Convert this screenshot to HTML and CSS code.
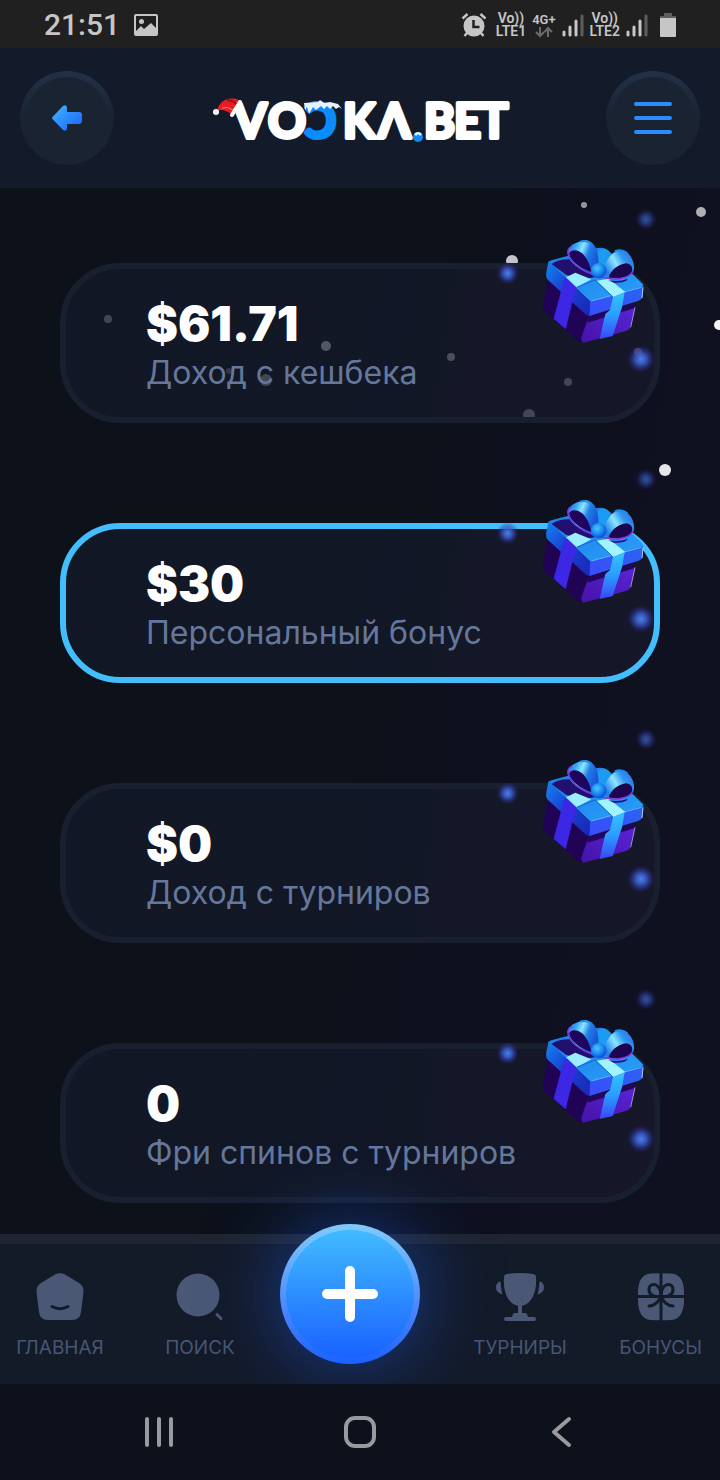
FILE: index.html
```html
<!DOCTYPE html>
<html lang="ru">
<head>
    <meta charset="UTF-8">
    <meta name="viewport" content="width=device-width, initial-scale=1.0">
    <title>VODKA.BET</title>
    <link rel="stylesheet" href="styles.css">
</head>
<body>
    <svg class="sprite" width="0" height="0" aria-hidden="true">
        <defs>
            <radialGradient id="spark">
                <stop offset="0" stop-color="#4b83ea"/>
                <stop offset="0.4" stop-color="#3a5cc8" stop-opacity="0.85"/>
                <stop offset="1" stop-color="#2a1d90" stop-opacity="0"/>
            </radialGradient>
            <linearGradient id="lidLeft" x1="0" y1="0" x2="1" y2="1">
                <stop offset="0" stop-color="#1685ee"/>
                <stop offset="0.4" stop-color="#1747d6"/>
                <stop offset="1" stop-color="#1a26b4"/>
            </linearGradient>
            <linearGradient id="lidTop" x1="0" y1="0" x2="1" y2="1">
                <stop offset="0" stop-color="#1b7ce8"/>
                <stop offset="1" stop-color="#2a9ff8"/>
            </linearGradient>
            <linearGradient id="lidRight" x1="0" y1="1" x2="1" y2="0">
                <stop offset="0" stop-color="#3a4cfb"/>
                <stop offset="1" stop-color="#2a64f0"/>
            </linearGradient>
            <linearGradient id="boxRight" x1="0" y1="1" x2="1" y2="0">
                <stop offset="0" stop-color="#4512a8"/>
                <stop offset="1" stop-color="#5a25d8"/>
            </linearGradient>
            <linearGradient id="tapeRight" x1="0" y1="0" x2="0" y2="1">
                <stop offset="0" stop-color="#35c3ff"/>
                <stop offset="0.5" stop-color="#2a9dff"/>
                <stop offset="1" stop-color="#3a45fa"/>
            </linearGradient>
            <linearGradient id="loopLeft" x1="0" y1="0" x2="1" y2="0.4">
                <stop offset="0" stop-color="#4a48d8"/>
                <stop offset="0.3" stop-color="#35a8f2"/>
                <stop offset="0.5" stop-color="#8fe6ff"/>
                <stop offset="0.7" stop-color="#1f7fe8"/>
                <stop offset="1" stop-color="#1a55d8"/>
            </linearGradient>
            <linearGradient id="loopRight" x1="0" y1="0.6" x2="1" y2="0">
                <stop offset="0" stop-color="#1f7fe8"/>
                <stop offset="0.35" stop-color="#8fe6ff"/>
                <stop offset="0.6" stop-color="#2f98f0"/>
                <stop offset="1" stop-color="#3a60e0"/>
            </linearGradient>
            <radialGradient id="knot" cx="0.4" cy="0.35" r="0.7">
                <stop offset="0" stop-color="#4cc6ff"/>
                <stop offset="0.6" stop-color="#1580ee"/>
                <stop offset="1" stop-color="#1b3cc8"/>
            </radialGradient>
            <linearGradient id="arrow" x1="0" y1="0" x2="1" y2="1">
                <stop offset="0" stop-color="#40b8ff"/>
                <stop offset="1" stop-color="#1a5fff"/>
            </linearGradient>
        </defs>
        <symbol id="gift" viewBox="45 45 495 510">
            <circle cx="498" cy="88" r="33" fill="url(#spark)" opacity="0.6"/>
            <circle cx="83" cy="250" r="34" fill="url(#spark)"/>
            <circle cx="483" cy="507" r="42" fill="url(#spark)"/>
            <!-- box -->
            <path d="M203 268L326 380L310 458L292 452L192 362Q186 354 188 344Z" fill="#210356"/>
            <path d="M326 382L466 346L451 412Q449 420 440 422L310 458Q302 454 304 442Z" fill="url(#boxRight)"/>
            <path d="M326 378L467 340L465 354L322 398Z" fill="#21065c"/>
            <path d="M465 352L452 412" stroke="#9c92d8" stroke-width="3" fill="none"/>
            <!-- lid -->
            <path d="M214 211L345 176Q372 168 390 186L486 280Q494 288 484 294L330 334L204 216Z" fill="url(#lidTop)"/>
            <path d="M214 222Q236 206 276 208L345 262L300 268L258 254Z" fill="#22106e"/>
            <path d="M206 214L330 334L328 378L318 374L204 270Q196 262 199 246Z" fill="url(#lidLeft)"/>
            <path d="M330 334L490 288L488 318Q487 328 476 332L328 378Z" fill="url(#lidRight)"/>
            <path d="M334 333L484 292" stroke="#5cbcff" stroke-width="3"/>
            <path d="M489 292L486 324" stroke="#a8c4ee" stroke-width="3"/>
            <!-- tape -->
            <path d="M255 262L290 294L280 325L257 418L221 386L244 300Z" fill="#3c27e4"/>
            <path d="M258 262L286 248L334 268L290 292Z" fill="#9aeeff"/>
            <path d="M350 272L386 266L436 306L400 322Z" fill="#a0f3ff"/>
            <path d="M399 321L434 307L426 352L398 438L359 447L376 372L390 360Z" fill="url(#tapeRight)"/>
            <path d="M290 292L345 270L398 320" stroke="#1465cf" stroke-width="3" fill="none"/>
            <!-- bow, back loop -->
            <path d="M348 192Q368 162 390 188L380 226L354 222Z" fill="#1b9bf2"/>
            <!-- bow, left loop -->
            <path d="M344 250C306 246 260 216 262 184C264 170 288 154 318 151C342 154 356 178 356 222Z" fill="url(#loopLeft)"/>
            <path d="M334 246C300 236 268 212 268 190C272 178 292 178 306 190C322 204 330 226 334 246Z" fill="#20055e"/>
            <path d="M342 254C304 244 264 214 264 184Q264 174 276 168" stroke="#7b35dc" stroke-width="4" fill="none"/>
            <path d="M300 155Q318 149 332 160" stroke="#1a8cf0" stroke-width="6" fill="none"/>
            <!-- bow, right loop -->
            <path d="M372 232C382 204 402 178 424 180C448 184 464 212 462 236C458 262 420 270 380 262Z" fill="url(#loopRight)"/>
            <path d="M386 262C392 242 412 224 438 220C456 222 460 236 454 248C442 264 412 268 386 262Z" fill="#1c0650"/>
            <path d="M362 260C396 272 440 270 460 244" stroke="#8a2cd4" stroke-width="4" fill="none"/>
            <path d="M404 184Q424 176 442 190" stroke="#1a8cf0" stroke-width="6" fill="none"/>
            <path d="M385 271Q420 276 444 266Q436 280 402 278Z" fill="#2a0a80"/>
            <circle cx="356" cy="242" r="23" fill="url(#knot)"/>
        </symbol>
        <symbol id="signal" viewBox="0 0 22 24">
            <path d="M2 19v3M8 14v8M14 8v14" stroke="#c6c6c6" stroke-width="3" stroke-linecap="round"/>
            <path d="M20 3v19" stroke="#5e5e5e" stroke-width="3" stroke-linecap="round"/>
        </symbol>
    </svg>

    <div class="status-bar">
        <span class="time">21:51</span>
        <svg class="picture-icon" width="24" height="22" viewBox="0 0 24 22" aria-hidden="true">
            <rect x="1" y="1" width="22" height="20" rx="1" fill="none" stroke="#c6c6c6" stroke-width="2"/>
            <circle cx="7.500" cy="7.500" r="2.500" fill="#c6c6c6"/>
            <path d="M2 17L7 12L10 15L17 9L22 14V21H2Z" fill="#c6c6c6"/>
        </svg>
        <div class="status-icons">
            <svg width="29" height="26" viewBox="0 0 29 26" aria-hidden="true">
                <circle cx="13" cy="14" r="10.500" fill="#c6c6c6"/>
                <path d="M1.500 6.500L6.500 2M24.500 6.500L19.500 2M6 21L3.500 24M20 21L22.500 24" stroke="#c6c6c6" stroke-width="2.500"/>
                <path d="M12.500 8v7h6" stroke="#202020" stroke-width="2.500" fill="none"/>
            </svg>
            <span class="net">Vo))<br>LTE1</span>
            <span class="net net-4g">4G+
                <svg width="18" height="12" viewBox="0 0 18 12" aria-hidden="true">
                    <path d="M5 1v9M1 6l4 4l4-4M13 11V2M9.500 6L13 2l4 4" stroke="#6a6a6a" stroke-width="2" fill="none"/>
                </svg>
            </span>
            <svg width="22" height="24" aria-hidden="true"><use href="#signal"/></svg>
            <span class="net">Vo))<br>LTE2</span>
            <svg width="22" height="24" aria-hidden="true"><use href="#signal"/></svg>
            <svg class="battery" width="16" height="24" viewBox="0 0 16 24" aria-hidden="true">
                <path d="M4 0h8v3h4v3H0V3h4z" fill="#5e5e5e"/>
                <path d="M0 5h16v18q0 1-1 1H1q-1 0-1-1z" fill="#c6c6c6"/>
            </svg>
        </div>
    </div>

    <header class="header">
        <button class="round-btn" type="button" aria-label="Назад">
            <svg width="30" height="26" viewBox="0 0 30 26" aria-hidden="true">
                <path d="M1 11.500L11 1Q15 -1 15 3V7H27Q30 7 30 10V16Q30 19 27 19H15V23Q15 27 11 25L1 14.500Q-1 13 1 11.500Z" fill="url(#arrow)"/>
            </svg>
        </button>
        <a class="logo" href="#" aria-label="VODKA.BET">
            <svg width="304" height="64" viewBox="-2 -7 304 64" aria-hidden="true">
                <g class="logo-text">
                    <text x="24 58" y="45">VO</text>
                    <text class="blue" x="95" y="45">Ɔ</text>
                    <text x="133 168" y="45">KΛ</text>
                    <text x="214 244 270" y="45">BET</text>
                </g>
                <circle cx="208" cy="44" r="5" fill="#0a8cff"/>
                <path d="M204 41Q208 37 212 41L210 43L208 41L206 43Z" fill="#e8f4ff"/>
                <!-- snow on the D -->
                <path d="M94 10L108 9L110 7L114 10L120 9L128 11L132 16L129 14L126 16L123 13L120 16L117 13L114 16L111 13L106 17L103 14L99 21L97 14L95 17Z" fill="#e6f1fb"/>
                <!-- santa hat -->
                <path d="M7 18C9 9 16 4 26 6C31 7 31 11 29 14L22 22Q14 15 7 18Z" fill="#e81c23"/>
                <path d="M17 7Q26 8 27 13" stroke="#9e0d12" stroke-width="2" fill="none"/>
                <path d="M12 15Q18 13 23 17" stroke="#fa7a70" stroke-width="1" fill="none"/>
                <path d="M22 22L30 9" stroke="#fff" stroke-width="4" stroke-linecap="round"/>
                <circle cx="6" cy="19" r="3" fill="#fff"/>
            </svg>
        </a>
        <button class="round-btn" type="button" aria-label="Меню">
            <svg width="38" height="34" viewBox="0 0 38 34" aria-hidden="true">
                <path d="M2 3H36M2 17H36M2 31H36" stroke="#2b8cff" stroke-width="4" stroke-linecap="round"/>
            </svg>
        </button>
    </header>

    <main class="content">
        <svg class="snow" viewBox="0 0 720 1046" preserveAspectRatio="xMidYMin meet" aria-hidden="true">
            <circle cx="584" cy="17" r="3" opacity="0.6"/>
            <circle cx="701" cy="24" r="5" opacity="0.7"/>
            <circle cx="512" cy="73" r="6" opacity="0.8"/>
            <circle cx="719" cy="137" r="5"/>
            <circle cx="665" cy="282" r="6" opacity="0.95"/>
            <circle cx="108" cy="131" r="4" opacity="0.6"/>
            <circle cx="326" cy="158" r="5" opacity="0.8"/>
            <circle cx="451" cy="169" r="4" opacity="0.7"/>
            <circle cx="568" cy="194" r="4" opacity="0.6"/>
            <circle cx="529" cy="227" r="6" opacity="0.6"/>
            <circle cx="229" cy="183" r="3" opacity="0.4"/>
            <circle cx="266" cy="192" r="6" opacity="0.6"/>
            <circle cx="638" cy="164" r="4" opacity="0.7"/>
        </svg>
        <section class="card">
            <h2>$61.71</h2>
            <p>Доход с кешбека</p>
            <svg class="gift" width="165" height="170" aria-hidden="true"><use href="#gift"/></svg>
        </section>
        <section class="card active">
            <h2>$30</h2>
            <p>Персональный бонус</p>
            <svg class="gift" width="165" height="170" aria-hidden="true"><use href="#gift"/></svg>
        </section>
        <section class="card">
            <h2>$0</h2>
            <p>Доход с турниров</p>
            <svg class="gift" width="165" height="170" aria-hidden="true"><use href="#gift"/></svg>
        </section>
        <section class="card">
            <h2>0</h2>
            <p>Фри спинов с турниров</p>
            <svg class="gift" width="165" height="170" aria-hidden="true"><use href="#gift"/></svg>
        </section>
    </main>

    <nav class="tab-bar">
        <a class="tab" href="#">
            <svg width="48" height="50" viewBox="0 0 48 50" aria-hidden="true">
                <path d="M19 2.500Q24 0 29 2.500L43 11Q48 14 47.500 20L45 40Q44 48 36 48H12Q4 48 3 40L0.500 20Q0 14 5 11Z"/>
                <path class="cut" d="M16 34.500Q24 39 32 34.500" stroke-width="3"/>
            </svg>
            <span>ГЛАВНАЯ</span>
        </a>
        <a class="tab" href="#">
            <svg width="48" height="50" viewBox="0 0 48 50" aria-hidden="true">
                <circle cx="22" cy="23" r="21.500"/>
                <path d="M41 42.500L45 46.500" stroke="#4a5876" stroke-width="3" stroke-linecap="round"/>
            </svg>
            <span>ПОИСК</span>
        </a>
        <button class="plus" type="button" aria-label="Пополнить">
            <svg width="56" height="56" viewBox="0 0 56 56" aria-hidden="true">
                <path d="M28 5V51M5 28H51" stroke="#fff" stroke-width="10" stroke-linecap="round"/>
            </svg>
        </button>
        <a class="tab" href="#">
            <svg width="48" height="50" viewBox="0 0 48 50" aria-hidden="true">
                <path d="M8 5Q8 2.500 11 2Q24 0 37 2Q40 2.500 40 5C41 18 37 31 27 33.500L26 34V41H29Q31 41 32 45H38Q40 45 40 47Q40 49 38 49H10Q8 49 8 47Q8 45 10 45H16Q17 41 19 41H22V34L21 33.500C11 31 7 18 8 5Z"/>
                <path d="M4.500 9.500Q5 18 6.500 22.500Q0 20 0 16Q0 10 4.500 9.500ZM43.500 9.500Q43 18 41.500 22.500Q48 20 48 16Q48 10 43.500 9.500Z"/>
            </svg>
            <span>ТУРНИРЫ</span>
        </a>
        <a class="tab" href="#">
            <svg width="48" height="50" viewBox="0 0 48 50" aria-hidden="true">
                <path d="M1 24.500Q0 2 14 1.500Q24 1 34 1.500Q48 2 47 24.500Q48 47 34 48Q24 48.500 14 48Q0 47 1 24.500Z"/>
                <path class="cut" d="M24 1V49M0 24.500H48" stroke-width="3"/>
                <path class="cut" d="M24 25C16 25 12 22 12 17.500C12 13 16 11.500 19 13C23 15 24 20 24 25C24 20 25 15 29 13C32 11.500 36 13 36 17.500C36 22 32 25 24 25ZM24 25Q19 34 12 34M24 25Q29 34 36 34" stroke-width="3"/>
            </svg>
            <span>БОНУСЫ</span>
        </a>
    </nav>

    <div class="system-bar">
        <button type="button" aria-label="Недавние">
            <svg width="32" height="32" viewBox="0 0 32 32" aria-hidden="true">
                <path d="M4 3V29M16 3V29M28 3V29" stroke-width="4"/>
            </svg>
        </button>
        <button type="button" aria-label="Домой">
            <svg width="32" height="32" viewBox="0 0 32 32" aria-hidden="true">
                <rect x="2" y="2" width="28" height="28" rx="9" stroke-width="4"/>
            </svg>
        </button>
        <button type="button" aria-label="Назад">
            <svg width="32" height="32" viewBox="0 0 32 32" aria-hidden="true">
                <path d="M24 3L9 16L24 29" stroke-width="4"/>
            </svg>
        </button>
    </div>
</body>
</html>
```

FILE: styles.css
```css
* {
    box-sizing: border-box;
}
body {
    margin: 0;
    min-height: 100vh;
    display: flex;
    flex-direction: column;
    background: #0c111b;
    color: #fff;
    font-family: Inter, "Liberation Sans", sans-serif;
    overflow-x: hidden;
}
button {
    border: none;
    background: none;
    padding: 0;
    cursor: pointer;
}
svg {
    display: block;
}
.sprite {
    position: absolute;
}

/* phone status bar */
.status-bar {
    display: flex;
    align-items: center;
    height: 48px;
    padding: 2px 44px 0;
    background: #202020;
    color: #c6c6c6;
    font-family: Roboto, sans-serif;
}
.time {
    font-size: 30px;
    font-weight: 500;
    line-height: 40px;
}
.picture-icon {
    margin-left: 14px;
}
.status-icons {
    display: flex;
    align-items: center;
    gap: 6px;
    margin-left: auto;
}
.net {
    font-size: 14px;
    font-weight: 600;
    line-height: 13px;
    text-align: center;
}
.net-4g {
    font-size: 13px;
}
.net-4g svg {
    margin: 0 auto;
}
.battery {
    margin-left: 6px;
}

/* header */
.header {
    display: flex;
    align-items: center;
    justify-content: space-between;
    height: 140px;
    padding: 0 20px;
    background: #131a29;
}
.round-btn {
    display: flex;
    align-items: center;
    justify-content: center;
    width: 94px;
    height: 94px;
    border: 6px solid transparent;
    border-radius: 50%;
    background: linear-gradient(#1a2332, #1a2332) padding-box, linear-gradient(#213147, #1a2332 50%) border-box;
}
.logo-text {
    font-family: Lato, Inter, sans-serif;
    font-size: 47px;
    font-weight: 700;
    fill: #fff;
    stroke: #fff;
    stroke-width: 4px;
    stroke-linejoin: round;
}
.logo-text .blue {
    fill: #0a8cff;
    stroke: #0a8cff;
}

/* bonuses */
.content {
    position: relative;
    flex: 1;
    display: flex;
    flex-direction: column;
    gap: 100px;
    padding: 75px 60px 31px;
    background: linear-gradient(100deg, #0c111a 50%, #0f1020 80%);
}
.snow {
    position: absolute;
    top: 0;
    left: 0;
    width: 100%;
    fill: #f2f2f5;
}
.card {
    position: relative;
    display: flex;
    flex-direction: column;
    justify-content: center;
    height: 160px;
    padding: 2px 0 0 80px;
    border: 6px solid #182030;
    border-radius: 60px;
    background: linear-gradient(100deg, rgba(20, 27, 44, 0.65) 50%, rgba(25, 27, 46, 0.65) 80%);
}
.card.active {
    border-color: #43befd;
}
.card h2 {
    margin: 0;
    font-size: 48px;
    font-weight: 900;
    line-height: 58px;
}
.card p {
    margin: 0;
    color: #66779c;
    font-size: 32px;
    line-height: 40px;
}
.gift {
    position: absolute;
    top: -64px;
    right: -6px;
}

/* bottom tabs */
.tab-bar {
    position: relative;
    display: grid;
    grid-template-columns: minmax(0, 12fr) minmax(0, 16fr) minmax(0, 14fr) minmax(0, 20fr) minmax(0, 10fr);
    align-items: start;
    justify-items: center;
    height: 150px;
    border-top: 10px solid #1f2530;
    background: #131a28;
}
.tab {
    display: flex;
    flex-direction: column;
    align-items: center;
    gap: 14px;
    padding-top: 28px;
    color: #465673;
    font-size: 19px;
    line-height: 24px;
    text-decoration: none;
}
.tab:last-child {
    justify-self: end;
    margin-right: 18px;
}
.tab svg {
    fill: #4a5876;
}
.tab .cut {
    fill: none;
    stroke: #131a28;
    stroke-linecap: round;
}
.plus {
    display: flex;
    align-items: center;
    justify-content: center;
    width: 140px;
    height: 140px;
    margin-top: -20px;
    border: 6px solid transparent;
    border-radius: 50%;
    background: linear-gradient(#41bbff, #1a62ff) padding-box, linear-gradient(#80cbfa, #4b88ff 60%, #1a62ff) border-box;
    box-shadow: 0 0 80px rgba(32, 100, 255, 0.5);
}

/* phone navigation */
.system-bar {
    position: relative;
    display: grid;
    grid-template-columns: repeat(3, 1fr);
    align-items: center;
    justify-items: center;
    height: 96px;
    padding: 0 58px;
    background: #0c111b;
}
.system-bar svg {
    fill: none;
    stroke: #99999e;
    stroke-linecap: round;
    stroke-linejoin: round;
}
```
